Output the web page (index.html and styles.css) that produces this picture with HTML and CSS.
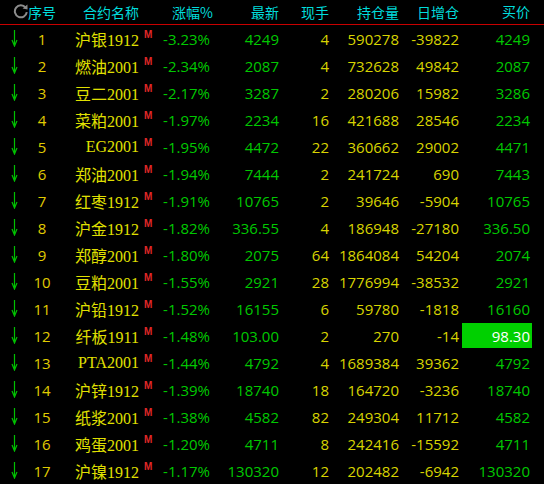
FILE: index.html
```html
<!DOCTYPE html>
<html>
<head>
<meta charset="utf-8">
<link rel="stylesheet" href="styles.css">
</head>
<body>
<div class="board">
  <div class="row head">
    <div class="c-arrow"><svg class="refresh" width="16" height="16" viewBox="0 0 16 16"><path d="M12.6 4.6 A6 6 0 1 0 13.8 9.2" fill="none" stroke="#8c8c8c" stroke-width="2"/><path d="M9.6 5.4 L14.6 6.4 L14.4 1.4 Z" fill="#8c8c8c"/></svg></div>
    <div class="c-rank">序号</div>
    <div class="c-name">合约名称</div>
    <div class="c-m"></div>
    <div class="c-pct hpct">涨幅%</div>
    <div class="c-num">最新</div>
    <div class="c-num">现手</div>
    <div class="c-num">持仓量</div>
    <div class="c-num">日增仓</div>
    <div class="c-bid">买价</div>
  </div>
  <div class="rows">
    <div class="row"><div class="c-arrow"><svg class="down" width="7" height="17" viewBox="0 0 7 17"><path d="M3.5 0 V16 M1 10 L3.5 16 L6 10" fill="none" stroke="#00c000" stroke-width="1.2"/></svg></div><div class="c-rank">1</div><div class="c-name">沪银1912</div><div class="c-m">M</div><div class="c-pct">-3.23%</div><div class="c-num g">4249</div><div class="c-num y">4</div><div class="c-num y">590278</div><div class="c-num y">-39822</div><div class="c-bid"><span class="bid">4249</span></div></div>
    <div class="row"><div class="c-arrow"><svg class="down" width="7" height="17" viewBox="0 0 7 17"><path d="M3.5 0 V16 M1 10 L3.5 16 L6 10" fill="none" stroke="#00c000" stroke-width="1.2"/></svg></div><div class="c-rank">2</div><div class="c-name">燃油2001</div><div class="c-m">M</div><div class="c-pct">-2.34%</div><div class="c-num g">2087</div><div class="c-num y">4</div><div class="c-num y">732628</div><div class="c-num y">49842</div><div class="c-bid"><span class="bid">2087</span></div></div>
    <div class="row"><div class="c-arrow"><svg class="down" width="7" height="17" viewBox="0 0 7 17"><path d="M3.5 0 V16 M1 10 L3.5 16 L6 10" fill="none" stroke="#00c000" stroke-width="1.2"/></svg></div><div class="c-rank">3</div><div class="c-name">豆二2001</div><div class="c-m">M</div><div class="c-pct">-2.17%</div><div class="c-num g">3287</div><div class="c-num y">2</div><div class="c-num y">280206</div><div class="c-num y">15982</div><div class="c-bid"><span class="bid">3286</span></div></div>
    <div class="row"><div class="c-arrow"><svg class="down" width="7" height="17" viewBox="0 0 7 17"><path d="M3.5 0 V16 M1 10 L3.5 16 L6 10" fill="none" stroke="#00c000" stroke-width="1.2"/></svg></div><div class="c-rank">4</div><div class="c-name">菜粕2001</div><div class="c-m">M</div><div class="c-pct">-1.97%</div><div class="c-num g">2234</div><div class="c-num y">16</div><div class="c-num y">421688</div><div class="c-num y">28546</div><div class="c-bid"><span class="bid">2234</span></div></div>
    <div class="row"><div class="c-arrow"><svg class="down" width="7" height="17" viewBox="0 0 7 17"><path d="M3.5 0 V16 M1 10 L3.5 16 L6 10" fill="none" stroke="#00c000" stroke-width="1.2"/></svg></div><div class="c-rank">5</div><div class="c-name">EG2001</div><div class="c-m">M</div><div class="c-pct">-1.95%</div><div class="c-num g">4472</div><div class="c-num y">22</div><div class="c-num y">360662</div><div class="c-num y">29002</div><div class="c-bid"><span class="bid">4471</span></div></div>
    <div class="row"><div class="c-arrow"><svg class="down" width="7" height="17" viewBox="0 0 7 17"><path d="M3.5 0 V16 M1 10 L3.5 16 L6 10" fill="none" stroke="#00c000" stroke-width="1.2"/></svg></div><div class="c-rank">6</div><div class="c-name">郑油2001</div><div class="c-m">M</div><div class="c-pct">-1.94%</div><div class="c-num g">7444</div><div class="c-num y">2</div><div class="c-num y">241724</div><div class="c-num y">690</div><div class="c-bid"><span class="bid">7443</span></div></div>
    <div class="row"><div class="c-arrow"><svg class="down" width="7" height="17" viewBox="0 0 7 17"><path d="M3.5 0 V16 M1 10 L3.5 16 L6 10" fill="none" stroke="#00c000" stroke-width="1.2"/></svg></div><div class="c-rank">7</div><div class="c-name">红枣1912</div><div class="c-m">M</div><div class="c-pct">-1.91%</div><div class="c-num g">10765</div><div class="c-num y">2</div><div class="c-num y">39646</div><div class="c-num y">-5904</div><div class="c-bid"><span class="bid">10765</span></div></div>
    <div class="row"><div class="c-arrow"><svg class="down" width="7" height="17" viewBox="0 0 7 17"><path d="M3.5 0 V16 M1 10 L3.5 16 L6 10" fill="none" stroke="#00c000" stroke-width="1.2"/></svg></div><div class="c-rank">8</div><div class="c-name">沪金1912</div><div class="c-m">M</div><div class="c-pct">-1.82%</div><div class="c-num g">336.55</div><div class="c-num y">4</div><div class="c-num y">186948</div><div class="c-num y">-27180</div><div class="c-bid"><span class="bid">336.50</span></div></div>
    <div class="row"><div class="c-arrow"><svg class="down" width="7" height="17" viewBox="0 0 7 17"><path d="M3.5 0 V16 M1 10 L3.5 16 L6 10" fill="none" stroke="#00c000" stroke-width="1.2"/></svg></div><div class="c-rank">9</div><div class="c-name">郑醇2001</div><div class="c-m">M</div><div class="c-pct">-1.80%</div><div class="c-num g">2075</div><div class="c-num y">64</div><div class="c-num y">1864084</div><div class="c-num y">54204</div><div class="c-bid"><span class="bid">2074</span></div></div>
    <div class="row"><div class="c-arrow"><svg class="down" width="7" height="17" viewBox="0 0 7 17"><path d="M3.5 0 V16 M1 10 L3.5 16 L6 10" fill="none" stroke="#00c000" stroke-width="1.2"/></svg></div><div class="c-rank">10</div><div class="c-name">豆粕2001</div><div class="c-m">M</div><div class="c-pct">-1.55%</div><div class="c-num g">2921</div><div class="c-num y">28</div><div class="c-num y">1776994</div><div class="c-num y">-38532</div><div class="c-bid"><span class="bid">2921</span></div></div>
    <div class="row"><div class="c-arrow"><svg class="down" width="7" height="17" viewBox="0 0 7 17"><path d="M3.5 0 V16 M1 10 L3.5 16 L6 10" fill="none" stroke="#00c000" stroke-width="1.2"/></svg></div><div class="c-rank">11</div><div class="c-name">沪铅1912</div><div class="c-m">M</div><div class="c-pct">-1.52%</div><div class="c-num g">16155</div><div class="c-num y">6</div><div class="c-num y">59780</div><div class="c-num y">-1818</div><div class="c-bid"><span class="bid">16160</span></div></div>
    <div class="row"><div class="c-arrow"><svg class="down" width="7" height="17" viewBox="0 0 7 17"><path d="M3.5 0 V16 M1 10 L3.5 16 L6 10" fill="none" stroke="#00c000" stroke-width="1.2"/></svg></div><div class="c-rank">12</div><div class="c-name">纤板1911</div><div class="c-m">M</div><div class="c-pct">-1.48%</div><div class="c-num g">103.00</div><div class="c-num y">2</div><div class="c-num y">270</div><div class="c-num y">-14</div><div class="c-bid"><span class="bid hl">98.30</span></div></div>
    <div class="row"><div class="c-arrow"><svg class="down" width="7" height="17" viewBox="0 0 7 17"><path d="M3.5 0 V16 M1 10 L3.5 16 L6 10" fill="none" stroke="#00c000" stroke-width="1.2"/></svg></div><div class="c-rank">13</div><div class="c-name">PTA2001</div><div class="c-m">M</div><div class="c-pct">-1.44%</div><div class="c-num g">4792</div><div class="c-num y">4</div><div class="c-num y">1689384</div><div class="c-num y">39362</div><div class="c-bid"><span class="bid">4792</span></div></div>
    <div class="row"><div class="c-arrow"><svg class="down" width="7" height="17" viewBox="0 0 7 17"><path d="M3.5 0 V16 M1 10 L3.5 16 L6 10" fill="none" stroke="#00c000" stroke-width="1.2"/></svg></div><div class="c-rank">14</div><div class="c-name">沪锌1912</div><div class="c-m">M</div><div class="c-pct">-1.39%</div><div class="c-num g">18740</div><div class="c-num y">18</div><div class="c-num y">164720</div><div class="c-num y">-3236</div><div class="c-bid"><span class="bid">18740</span></div></div>
    <div class="row"><div class="c-arrow"><svg class="down" width="7" height="17" viewBox="0 0 7 17"><path d="M3.5 0 V16 M1 10 L3.5 16 L6 10" fill="none" stroke="#00c000" stroke-width="1.2"/></svg></div><div class="c-rank">15</div><div class="c-name">纸浆2001</div><div class="c-m">M</div><div class="c-pct">-1.38%</div><div class="c-num g">4582</div><div class="c-num y">82</div><div class="c-num y">249304</div><div class="c-num y">11712</div><div class="c-bid"><span class="bid">4582</span></div></div>
    <div class="row"><div class="c-arrow"><svg class="down" width="7" height="17" viewBox="0 0 7 17"><path d="M3.5 0 V16 M1 10 L3.5 16 L6 10" fill="none" stroke="#00c000" stroke-width="1.2"/></svg></div><div class="c-rank">16</div><div class="c-name">鸡蛋2001</div><div class="c-m">M</div><div class="c-pct">-1.20%</div><div class="c-num g">4711</div><div class="c-num y">8</div><div class="c-num y">242416</div><div class="c-num y">-15592</div><div class="c-bid"><span class="bid">4711</span></div></div>
    <div class="row"><div class="c-arrow"><svg class="down" width="7" height="17" viewBox="0 0 7 17"><path d="M3.5 0 V16 M1 10 L3.5 16 L6 10" fill="none" stroke="#00c000" stroke-width="1.2"/></svg></div><div class="c-rank">17</div><div class="c-name">沪镍1912</div><div class="c-m">M</div><div class="c-pct">-1.17%</div><div class="c-num g">130320</div><div class="c-num y">12</div><div class="c-num y">202482</div><div class="c-num y">-6942</div><div class="c-bid"><span class="bid">130320</span></div></div>
  </div>
</div>
</body>
</html>
```
FILE: styles.css
```css
html, body {
  margin: 0;
  padding: 0;
  background: #000;
}
.board {
  width: 544px;
  height: 484px;
  overflow: hidden;
  background: #000;
  font-family: "Open Sans", "Noto Sans", "Noto Sans CJK SC", sans-serif;
  font-size: 15px;
}
.row {
  display: grid;
  grid-template-columns: 28px 28px 83px 21px 53px 66px 50px 70px 60px 73px 12px;
  height: 27px;
  align-items: center;
}
.head {
  height: 24px;
  border-bottom: 1px solid #c80000;
  color: #00dcdc;
  font-family: "Noto Sans CJK SC", sans-serif;
  font-size: 14px;
  line-height: 24px;
}
.head > div {
  padding-bottom: 2px;
}
.c-arrow {
  position: relative;
  height: 100%;
}
.refresh {
  position: absolute;
  left: 13px;
  top: 4px;
}
.down {
  position: absolute;
  left: 11px;
  top: 5px;
}
.c-rank {
  text-align: center;
  color: #e0cc00;
}
.head .c-rank { color: #00dcdc; }
.c-name {
  text-align: right;
  color: #e0e000;
  font-family: "Liberation Serif", "Noto Sans CJK SC", serif;
  font-size: 16px;
  white-space: nowrap;
}
.head .c-name {
  color: #00dcdc;
  font-family: "Noto Sans CJK SC", sans-serif;
  font-size: 14px;
}
.c-m {
  align-self: start;
  padding: 5px 0 0 5px;
  color: #e02828;
  font-family: "Liberation Sans", sans-serif;
  font-weight: bold;
  font-size: 10px;
  line-height: 10px;
}
.c-pct {
  text-align: right;
  padding-right: 3px;
  color: #00c800;
  white-space: nowrap;
}
.head .hpct {
  padding-right: 0;
  color: #00dcdc;
}
.c-num {
  text-align: right;
  white-space: nowrap;
}
.g { color: #00c800; }
.y { color: #d8d400; }
.c-bid {
  text-align: right;
  height: 100%;
  display: flex;
  align-items: stretch;
}
.head .c-bid {
  display: block;
  padding-right: 2px;
}
.bid {
  flex: 1;
  margin: 1px 0 1px 3px;
  padding-right: 2px;
  color: #00c800;
  display: flex;
  align-items: center;
  justify-content: flex-end;
}
.bid.hl {
  background: #00d000;
  color: #fff;
}
```
